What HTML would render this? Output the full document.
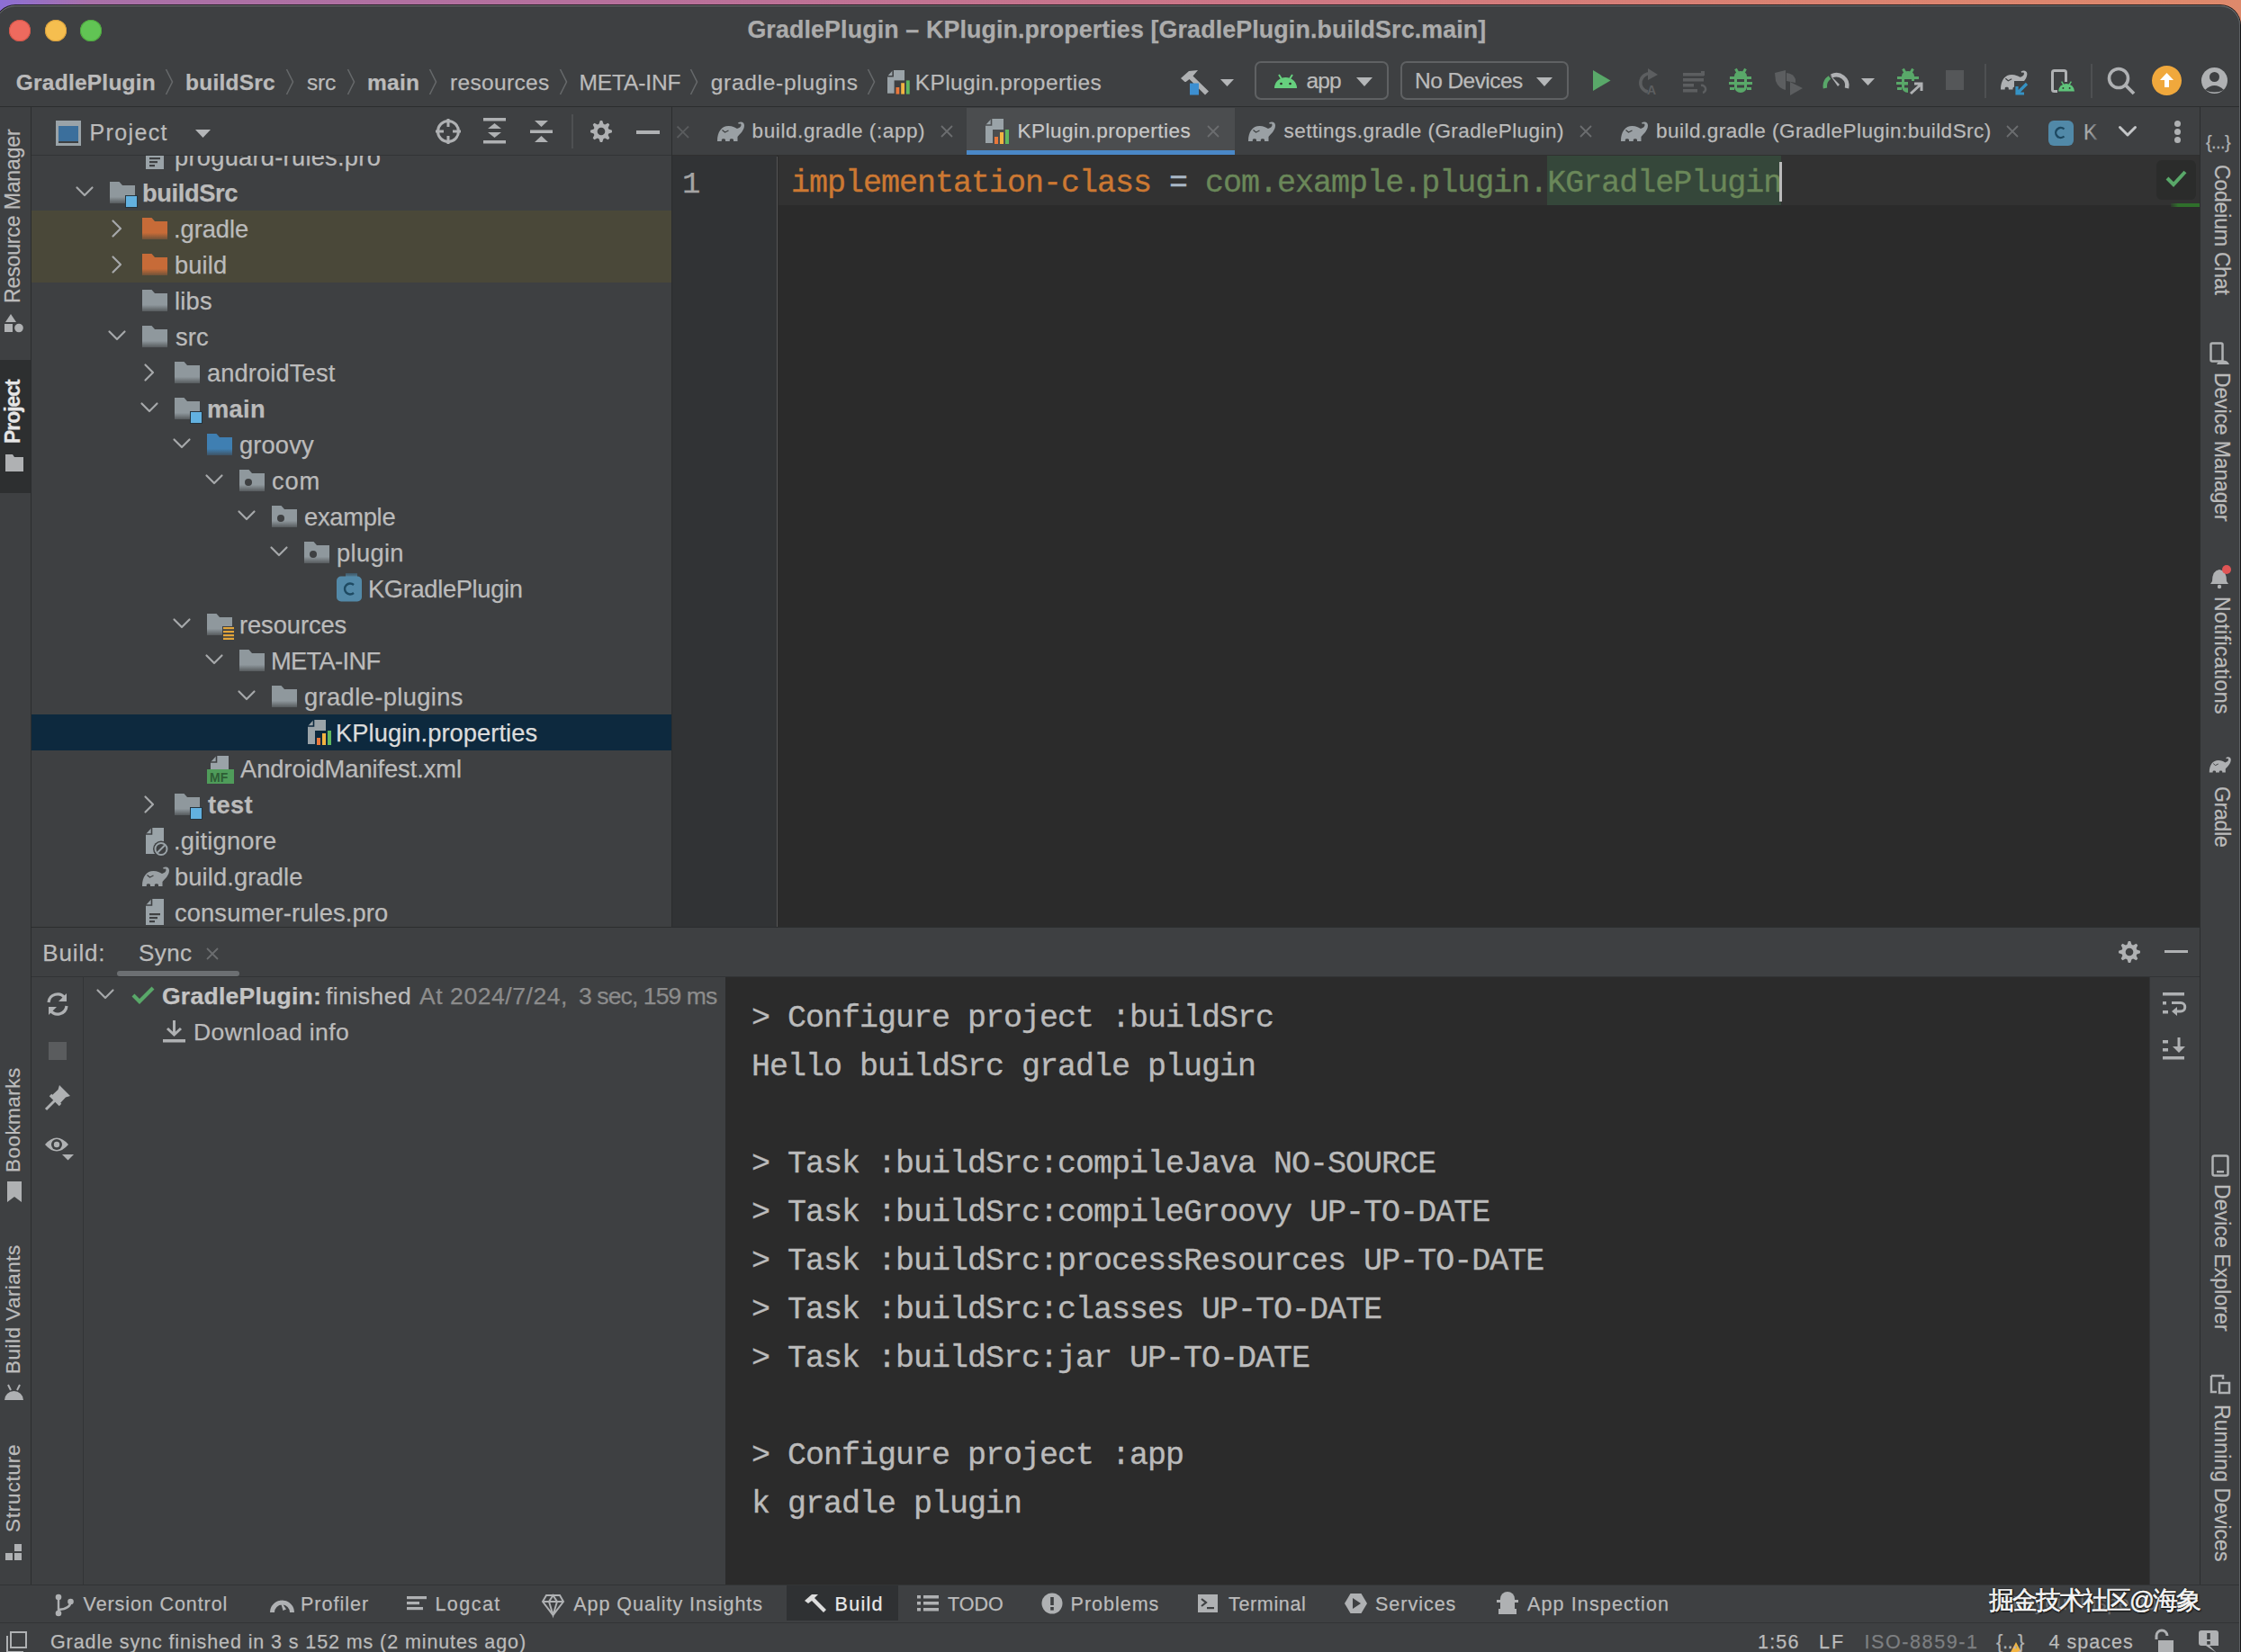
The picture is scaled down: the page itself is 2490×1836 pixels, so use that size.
<!DOCTYPE html><html><head><meta charset="utf-8"><style>
html,body{margin:0;padding:0;width:2490px;height:1836px;overflow:hidden;}
body{position:relative;background:linear-gradient(90deg,#8c6fd6 0%,#a870a8 4%,#b8709a 30%,#cc7686 55%,#d98172 78%,#de896b 100%);font-family:'Liberation Sans',sans-serif;color:#bbbbbb;}
.a{position:absolute;}
.t{position:absolute;white-space:nowrap;-webkit-text-stroke:0.25px currentColor;}
svg{position:absolute;overflow:visible;}
</style></head><body>
<div class="a" style="left:-5px;top:6px;width:2494px;height:1860px;border-radius:22px;background:#3e4042;box-shadow:0 0 0 1px #161618;"></div>
<div class="a" style="left:-5px;top:6px;width:2494px;height:1858px;border-radius:22px;box-shadow:inset 0 1px 0 #6f7173, inset -1px 0 0 #5d6063;"></div>
<div class="a" style="left:0px;top:118px;width:2488px;height:1px;background:#2b2d2e;"></div>
<div class="a" style="left:34px;top:119px;width:1px;height:1642px;background:#2b2d2e;"></div>
<div class="a" style="left:746px;top:119px;width:1px;height:911px;background:#2b2d2e;"></div>
<div class="a" style="left:747px;top:172px;width:1697px;height:1px;background:#303030;"></div>
<div class="a" style="left:747px;top:173px;width:1697px;height:857px;background:#2b2b2b;"></div>
<div class="a" style="left:747px;top:173px;width:116px;height:857px;background:#313335;"></div>
<div class="a" style="left:865px;top:173px;width:1579px;height:55px;background:#323232;"></div>
<div class="a" style="left:863px;top:174px;width:1px;height:856px;background:#555555;"></div>
<div class="a" style="left:2444px;top:119px;width:1px;height:1642px;background:#2b2d2e;"></div>
<div class="a" style="left:35px;top:1030px;width:2409px;height:1px;background:#2b2d2e;"></div>
<div class="a" style="left:35px;top:1085px;width:2409px;height:1px;background:#323436;"></div>
<div class="a" style="left:92px;top:1086px;width:1px;height:675px;background:#323436;"></div>
<div class="a" style="left:806px;top:1086px;width:1582px;height:675px;background:#2b2b2b;"></div>
<div class="a" style="left:2388px;top:1086px;width:1px;height:675px;background:#323436;"></div>
<div class="a" style="left:0px;top:1761px;width:2488px;height:1px;background:#323436;"></div>
<div class="a" style="left:0px;top:1803px;width:2488px;height:1px;background:#323436;"></div>
<div class="a" style="left:10px;top:22px;width:24px;height:24px;border-radius:50%;background:#ee6a5e;box-shadow:inset 0 0 0 1px #d25548"></div>
<div class="a" style="left:50px;top:22px;width:24px;height:24px;border-radius:50%;background:#f5be4f;box-shadow:inset 0 0 0 1px #d9a03d"></div>
<div class="a" style="left:89px;top:22px;width:24px;height:24px;border-radius:50%;background:#61c454;box-shadow:inset 0 0 0 1px #4fa83f"></div>
<div class="a" style="left:1074px;top:120px;width:298px;height:52px;background:#4b4d4f;"></div>
<div class="a" style="left:1074px;top:167px;width:298px;height:5px;background:#4a88c7;"></div>
<div class="a" style="left:35px;top:234px;width:711px;height:80px;background:#4a4839;"></div>
<div class="a" style="left:35px;top:794px;width:711px;height:40px;background:#0d293e;"></div>
<div class="a" style="left:1719px;top:173px;width:260px;height:55px;background:#35473a;"></div>
<div class="t" style="left:879px;top:186.7px;font-family:'Liberation Mono',monospace;font-size:35px;line-height:35px;letter-spacing:-1px;-webkit-text-stroke:0.35px;"><span style="color:#cc7832">implementation-class</span><span style="color:#a9b7c6"> = </span><span style="color:#6a8759">com.example.plugin.KGradlePlugin</span></div>
<div class="a" style="left:1977px;top:180px;width:3px;height:44px;background:#bbbbbb;"></div>
<div class="a" style="left:130px;top:1079px;width:136px;height:6px;border-radius:3px;background:#6c6f72"></div>
<div class="t" style="left:835px;top:1115.4px;font-family:'Liberation Mono',monospace;font-size:35px;line-height:35px;letter-spacing:-1px;-webkit-text-stroke:0.35px #bbbbbb;color:#bbbbbb">&gt; Configure project :buildSrc</div>
<div class="t" style="left:835px;top:1169.4px;font-family:'Liberation Mono',monospace;font-size:35px;line-height:35px;letter-spacing:-1px;-webkit-text-stroke:0.35px #bbbbbb;color:#bbbbbb">Hello buildSrc gradle plugin</div>
<div class="t" style="left:835px;top:1277.4px;font-family:'Liberation Mono',monospace;font-size:35px;line-height:35px;letter-spacing:-1px;-webkit-text-stroke:0.35px #bbbbbb;color:#bbbbbb">&gt; Task :buildSrc:compileJava NO-SOURCE</div>
<div class="t" style="left:835px;top:1331.4px;font-family:'Liberation Mono',monospace;font-size:35px;line-height:35px;letter-spacing:-1px;-webkit-text-stroke:0.35px #bbbbbb;color:#bbbbbb">&gt; Task :buildSrc:compileGroovy UP-TO-DATE</div>
<div class="t" style="left:835px;top:1385.4px;font-family:'Liberation Mono',monospace;font-size:35px;line-height:35px;letter-spacing:-1px;-webkit-text-stroke:0.35px #bbbbbb;color:#bbbbbb">&gt; Task :buildSrc:processResources UP-TO-DATE</div>
<div class="t" style="left:835px;top:1439.4px;font-family:'Liberation Mono',monospace;font-size:35px;line-height:35px;letter-spacing:-1px;-webkit-text-stroke:0.35px #bbbbbb;color:#bbbbbb">&gt; Task :buildSrc:classes UP-TO-DATE</div>
<div class="t" style="left:835px;top:1493.4px;font-family:'Liberation Mono',monospace;font-size:35px;line-height:35px;letter-spacing:-1px;-webkit-text-stroke:0.35px #bbbbbb;color:#bbbbbb">&gt; Task :buildSrc:jar UP-TO-DATE</div>
<div class="t" style="left:835px;top:1601.4px;font-family:'Liberation Mono',monospace;font-size:35px;line-height:35px;letter-spacing:-1px;-webkit-text-stroke:0.35px #bbbbbb;color:#bbbbbb">&gt; Configure project :app</div>
<div class="t" style="left:835px;top:1655.4px;font-family:'Liberation Mono',monospace;font-size:35px;line-height:35px;letter-spacing:-1px;-webkit-text-stroke:0.35px #bbbbbb;color:#bbbbbb">k gradle plugin</div>
<div class="a" style="left:874px;top:1762px;width:124px;height:39px;background:#2f3133;"></div>
<div class="a" style="left:0px;top:400px;width:34px;height:148px;background:#2d2f30;"></div>
<svg style="left:183px;top:76px;" width="10" height="30" viewBox="0 0 10 30"><path d="M1.5 1 L8.5 15 L1.5 29" fill="none" stroke="#66686a" stroke-width="1.6"/></svg>
<svg style="left:317px;top:76px;" width="10" height="30" viewBox="0 0 10 30"><path d="M1.5 1 L8.5 15 L1.5 29" fill="none" stroke="#66686a" stroke-width="1.6"/></svg>
<svg style="left:385px;top:76px;" width="10" height="30" viewBox="0 0 10 30"><path d="M1.5 1 L8.5 15 L1.5 29" fill="none" stroke="#66686a" stroke-width="1.6"/></svg>
<svg style="left:476px;top:76px;" width="10" height="30" viewBox="0 0 10 30"><path d="M1.5 1 L8.5 15 L1.5 29" fill="none" stroke="#66686a" stroke-width="1.6"/></svg>
<svg style="left:620.5px;top:76px;" width="10" height="30" viewBox="0 0 10 30"><path d="M1.5 1 L8.5 15 L1.5 29" fill="none" stroke="#66686a" stroke-width="1.6"/></svg>
<svg style="left:766px;top:76px;" width="10" height="30" viewBox="0 0 10 30"><path d="M1.5 1 L8.5 15 L1.5 29" fill="none" stroke="#66686a" stroke-width="1.6"/></svg>
<svg style="left:962.5px;top:76px;" width="10" height="30" viewBox="0 0 10 30"><path d="M1.5 1 L8.5 15 L1.5 29" fill="none" stroke="#66686a" stroke-width="1.6"/></svg>
<svg style="left:986px;top:78px;" width="28" height="29" viewBox="0 0 28 29"><g transform="scale(0.95)"><path d="M6.5 0 H20 V27 H0 V7 Z" fill="#9aa3a8"/><path d="M6.5 0 V7 H0" fill="none" stroke="#3e4042" stroke-width="1.6"/><rect x="8" y="12" width="20" height="17" fill="#3e4042"/><rect x="10" y="20" width="4" height="8" fill="#e9773a"/><rect x="16" y="15" width="4" height="13" fill="#f2b441"/><rect x="22" y="12" width="4" height="16" fill="#5fb85f"/></g></svg>
<svg style="left:162px;top:159px;" width="20" height="29" viewBox="0 0 20 29"><path d="M6.5 0 H20 V29 H0 V7 Z" fill="#9aa3a8"/><path d="M6.5 0 V7 H0" fill="none" stroke="#3e4042" stroke-width="1.6"/><g fill="#3e4042"><rect x="4" y="16" width="12" height="2.2"/><rect x="4" y="20" width="9" height="2.2"/><rect x="4" y="24" width="6" height="2.2"/></g></svg>
<svg style="left:84px;top:206.5px;" width="20" height="12" viewBox="0 0 20 12"><path d="M1.5 1.5 L10 10 L18.5 1.5" fill="none" stroke="#a6a8aa" stroke-width="2.2" stroke-linecap="round" stroke-linejoin="round"/></svg>
<svg style="left:122px;top:202px;" width="28" height="24" viewBox="0 0 28 24"><defs><linearGradient id="g1" x1="0" y1="0" x2="0" y2="1"><stop offset="0.7" stop-color="#8f989d"/><stop offset="1" stop-color="#8f989d" stop-opacity="0.3"/></linearGradient></defs><path d="M0 0 H10.5 L14 4 H28 V24 H0 Z" fill="url(#g1)"/></svg>
<div class="a" style="left:139px;top:217px;width:14px;height:14px;background:#25333c"></div>
<div class="a" style="left:140px;top:218px;width:12px;height:12px;background:#62b1e0"></div>
<svg style="left:124px;top:244px;" width="12" height="20" viewBox="0 0 12 20"><path d="M1.5 1.5 L10 10 L1.5 18.5" fill="none" stroke="#a6a8aa" stroke-width="2.2" stroke-linecap="round" stroke-linejoin="round"/></svg>
<svg style="left:158px;top:242px;" width="28" height="24" viewBox="0 0 28 24"><defs><linearGradient id="g2" x1="0" y1="0" x2="0" y2="1"><stop offset="0.7" stop-color="#c76b38"/><stop offset="1" stop-color="#c76b38" stop-opacity="0.3"/></linearGradient></defs><path d="M0 0 H10.5 L14 4 H28 V24 H0 Z" fill="url(#g2)"/></svg>
<svg style="left:124px;top:284px;" width="12" height="20" viewBox="0 0 12 20"><path d="M1.5 1.5 L10 10 L1.5 18.5" fill="none" stroke="#a6a8aa" stroke-width="2.2" stroke-linecap="round" stroke-linejoin="round"/></svg>
<svg style="left:158px;top:282px;" width="28" height="24" viewBox="0 0 28 24"><defs><linearGradient id="g3" x1="0" y1="0" x2="0" y2="1"><stop offset="0.7" stop-color="#c76b38"/><stop offset="1" stop-color="#c76b38" stop-opacity="0.3"/></linearGradient></defs><path d="M0 0 H10.5 L14 4 H28 V24 H0 Z" fill="url(#g3)"/></svg>
<svg style="left:158px;top:322px;" width="28" height="24" viewBox="0 0 28 24"><defs><linearGradient id="g4" x1="0" y1="0" x2="0" y2="1"><stop offset="0.7" stop-color="#8f989d"/><stop offset="1" stop-color="#8f989d" stop-opacity="0.3"/></linearGradient></defs><path d="M0 0 H10.5 L14 4 H28 V24 H0 Z" fill="url(#g4)"/></svg>
<svg style="left:120px;top:366.5px;" width="20" height="12" viewBox="0 0 20 12"><path d="M1.5 1.5 L10 10 L18.5 1.5" fill="none" stroke="#a6a8aa" stroke-width="2.2" stroke-linecap="round" stroke-linejoin="round"/></svg>
<svg style="left:158px;top:362px;" width="28" height="24" viewBox="0 0 28 24"><defs><linearGradient id="g5" x1="0" y1="0" x2="0" y2="1"><stop offset="0.7" stop-color="#8f989d"/><stop offset="1" stop-color="#8f989d" stop-opacity="0.3"/></linearGradient></defs><path d="M0 0 H10.5 L14 4 H28 V24 H0 Z" fill="url(#g5)"/></svg>
<svg style="left:160px;top:404px;" width="12" height="20" viewBox="0 0 12 20"><path d="M1.5 1.5 L10 10 L1.5 18.5" fill="none" stroke="#a6a8aa" stroke-width="2.2" stroke-linecap="round" stroke-linejoin="round"/></svg>
<svg style="left:194px;top:402px;" width="28" height="24" viewBox="0 0 28 24"><defs><linearGradient id="g6" x1="0" y1="0" x2="0" y2="1"><stop offset="0.7" stop-color="#8f989d"/><stop offset="1" stop-color="#8f989d" stop-opacity="0.3"/></linearGradient></defs><path d="M0 0 H10.5 L14 4 H28 V24 H0 Z" fill="url(#g6)"/></svg>
<svg style="left:156px;top:446.5px;" width="20" height="12" viewBox="0 0 20 12"><path d="M1.5 1.5 L10 10 L18.5 1.5" fill="none" stroke="#a6a8aa" stroke-width="2.2" stroke-linecap="round" stroke-linejoin="round"/></svg>
<svg style="left:194px;top:442px;" width="28" height="24" viewBox="0 0 28 24"><defs><linearGradient id="g7" x1="0" y1="0" x2="0" y2="1"><stop offset="0.7" stop-color="#8f989d"/><stop offset="1" stop-color="#8f989d" stop-opacity="0.3"/></linearGradient></defs><path d="M0 0 H10.5 L14 4 H28 V24 H0 Z" fill="url(#g7)"/></svg>
<div class="a" style="left:211px;top:457px;width:14px;height:14px;background:#25333c"></div>
<div class="a" style="left:212px;top:458px;width:12px;height:12px;background:#62b1e0"></div>
<svg style="left:192px;top:486.5px;" width="20" height="12" viewBox="0 0 20 12"><path d="M1.5 1.5 L10 10 L18.5 1.5" fill="none" stroke="#a6a8aa" stroke-width="2.2" stroke-linecap="round" stroke-linejoin="round"/></svg>
<svg style="left:230px;top:482px;" width="28" height="24" viewBox="0 0 28 24"><defs><linearGradient id="g8" x1="0" y1="0" x2="0" y2="1"><stop offset="0.7" stop-color="#3f7fb2"/><stop offset="1" stop-color="#3f7fb2" stop-opacity="0.3"/></linearGradient></defs><path d="M0 0 H10.5 L14 4 H28 V24 H0 Z" fill="url(#g8)"/></svg>
<svg style="left:228px;top:526.5px;" width="20" height="12" viewBox="0 0 20 12"><path d="M1.5 1.5 L10 10 L18.5 1.5" fill="none" stroke="#a6a8aa" stroke-width="2.2" stroke-linecap="round" stroke-linejoin="round"/></svg>
<svg style="left:266px;top:522px;" width="28" height="24" viewBox="0 0 28 24"><defs><linearGradient id="g9" x1="0" y1="0" x2="0" y2="1"><stop offset="0.7" stop-color="#8f989d"/><stop offset="1" stop-color="#8f989d" stop-opacity="0.3"/></linearGradient></defs><path d="M0 0 H10.5 L14 4 H28 V24 H0 Z" fill="url(#g9)"/></svg>
<div class="a" style="left:272px;top:532px;width:8px;height:8px;border-radius:50%;background:#3e4042"></div>
<svg style="left:264px;top:566.5px;" width="20" height="12" viewBox="0 0 20 12"><path d="M1.5 1.5 L10 10 L18.5 1.5" fill="none" stroke="#a6a8aa" stroke-width="2.2" stroke-linecap="round" stroke-linejoin="round"/></svg>
<svg style="left:302px;top:562px;" width="28" height="24" viewBox="0 0 28 24"><defs><linearGradient id="g10" x1="0" y1="0" x2="0" y2="1"><stop offset="0.7" stop-color="#8f989d"/><stop offset="1" stop-color="#8f989d" stop-opacity="0.3"/></linearGradient></defs><path d="M0 0 H10.5 L14 4 H28 V24 H0 Z" fill="url(#g10)"/></svg>
<div class="a" style="left:308px;top:572px;width:8px;height:8px;border-radius:50%;background:#3e4042"></div>
<svg style="left:300px;top:606.5px;" width="20" height="12" viewBox="0 0 20 12"><path d="M1.5 1.5 L10 10 L18.5 1.5" fill="none" stroke="#a6a8aa" stroke-width="2.2" stroke-linecap="round" stroke-linejoin="round"/></svg>
<svg style="left:338px;top:602px;" width="28" height="24" viewBox="0 0 28 24"><defs><linearGradient id="g11" x1="0" y1="0" x2="0" y2="1"><stop offset="0.7" stop-color="#8f989d"/><stop offset="1" stop-color="#8f989d" stop-opacity="0.3"/></linearGradient></defs><path d="M0 0 H10.5 L14 4 H28 V24 H0 Z" fill="url(#g11)"/></svg>
<div class="a" style="left:344px;top:612px;width:8px;height:8px;border-radius:50%;background:#3e4042"></div>
<svg style="left:374px;top:637px;" width="28" height="32" viewBox="0 0 28 32"><g transform="scale(1.0)"><defs><linearGradient id="g12" x1="0" y1="0" x2="0" y2="1"><stop offset="0" stop-color="#3d5868"/><stop offset="1" stop-color="#5b8aa6"/></linearGradient></defs><rect x="10" y="0" width="13" height="6" fill="url(#g12)"/><rect x="0" y="3.5" width="28" height="28" rx="5" fill="#5389a8"/><path d="M19 13 A6 6 0 1 0 19 22" fill="none" stroke="#1e4a62" stroke-width="2.4"/></g></svg>
<svg style="left:192px;top:686.5px;" width="20" height="12" viewBox="0 0 20 12"><path d="M1.5 1.5 L10 10 L18.5 1.5" fill="none" stroke="#a6a8aa" stroke-width="2.2" stroke-linecap="round" stroke-linejoin="round"/></svg>
<svg style="left:230px;top:682px;" width="28" height="24" viewBox="0 0 28 24"><defs><linearGradient id="g13" x1="0" y1="0" x2="0" y2="1"><stop offset="0.7" stop-color="#8f989d"/><stop offset="1" stop-color="#8f989d" stop-opacity="0.3"/></linearGradient></defs><path d="M0 0 H10.5 L14 4 H28 V24 H0 Z" fill="url(#g13)"/></svg>
<div class="a" style="left:247px;top:696px;width:13px;height:16px;background:#3e4042"></div>
<svg style="left:248px;top:697px;" width="12" height="14" viewBox="0 0 12 14"><g fill="#e3a53a"><rect x="0" y="0" width="12" height="2.2"/><rect x="0" y="4" width="12" height="2.2"/><rect x="0" y="8" width="12" height="2.2"/><rect x="0" y="11.8" width="12" height="2.2"/></g></svg>
<svg style="left:228px;top:726.5px;" width="20" height="12" viewBox="0 0 20 12"><path d="M1.5 1.5 L10 10 L18.5 1.5" fill="none" stroke="#a6a8aa" stroke-width="2.2" stroke-linecap="round" stroke-linejoin="round"/></svg>
<svg style="left:266px;top:722px;" width="28" height="24" viewBox="0 0 28 24"><defs><linearGradient id="g14" x1="0" y1="0" x2="0" y2="1"><stop offset="0.7" stop-color="#8f989d"/><stop offset="1" stop-color="#8f989d" stop-opacity="0.3"/></linearGradient></defs><path d="M0 0 H10.5 L14 4 H28 V24 H0 Z" fill="url(#g14)"/></svg>
<svg style="left:264px;top:766.5px;" width="20" height="12" viewBox="0 0 20 12"><path d="M1.5 1.5 L10 10 L18.5 1.5" fill="none" stroke="#a6a8aa" stroke-width="2.2" stroke-linecap="round" stroke-linejoin="round"/></svg>
<svg style="left:302px;top:762px;" width="28" height="24" viewBox="0 0 28 24"><defs><linearGradient id="g15" x1="0" y1="0" x2="0" y2="1"><stop offset="0.7" stop-color="#8f989d"/><stop offset="1" stop-color="#8f989d" stop-opacity="0.3"/></linearGradient></defs><path d="M0 0 H10.5 L14 4 H28 V24 H0 Z" fill="url(#g15)"/></svg>
<svg style="left:342px;top:800px;" width="28" height="29" viewBox="0 0 28 29"><g transform="scale(1.0)"><path d="M6.5 0 H20 V27 H0 V7 Z" fill="#9aa3a8"/><path d="M6.5 0 V7 H0" fill="none" stroke="#0d293e" stroke-width="1.6"/><rect x="8" y="12" width="20" height="17" fill="#0d293e"/><rect x="10" y="20" width="4" height="8" fill="#e9773a"/><rect x="16" y="15" width="4" height="13" fill="#f2b441"/><rect x="22" y="12" width="4" height="16" fill="#5fb85f"/></g></svg>
<svg style="left:230px;top:840px;" width="30" height="31" viewBox="0 0 30 31"><path d="M10.5 0 H24 V16 H4 V7 Z" fill="#9aa3a8"/><path d="M10.5 0 V7 H4" fill="none" stroke="#3e4042" stroke-width="1.6"/><rect x="0" y="15" width="30" height="16" fill="#4f9c5a"/><text x="3" y="29" font-family="'Liberation Sans'" font-weight="bold" font-size="14" fill="#2e5e35">MF</text></svg>
<svg style="left:160px;top:884px;" width="12" height="20" viewBox="0 0 12 20"><path d="M1.5 1.5 L10 10 L1.5 18.5" fill="none" stroke="#a6a8aa" stroke-width="2.2" stroke-linecap="round" stroke-linejoin="round"/></svg>
<svg style="left:194px;top:882px;" width="28" height="24" viewBox="0 0 28 24"><defs><linearGradient id="g16" x1="0" y1="0" x2="0" y2="1"><stop offset="0.7" stop-color="#8f989d"/><stop offset="1" stop-color="#8f989d" stop-opacity="0.3"/></linearGradient></defs><path d="M0 0 H10.5 L14 4 H28 V24 H0 Z" fill="url(#g16)"/></svg>
<div class="a" style="left:211px;top:897px;width:14px;height:14px;background:#25333c"></div>
<div class="a" style="left:212px;top:898px;width:12px;height:12px;background:#62b1e0"></div>
<svg style="left:162px;top:920px;" width="27" height="33" viewBox="0 0 27 33"><path d="M6.5 0 H20 V29 H0 V7 Z" fill="#9aa3a8"/><path d="M6.5 0 V7 H0" fill="none" stroke="#3e4042" stroke-width="1.6"/><circle cx="17" cy="23.5" r="9" fill="#3e4042"/><circle cx="17" cy="23.5" r="6.5" fill="none" stroke="#9aa3a8" stroke-width="2"/><path d="M13 27.5 L21 19.5" stroke="#9aa3a8" stroke-width="2"/></svg>
<svg style="left:157px;top:963px;" width="33" height="24" viewBox="0 0 33 24"><g transform="scale(1.0)"><path d="M1 22 C1 11 6 5 13.5 5 C18 5 20.5 6.5 23 8 C25.5 7 27.5 6 27.5 4 C27.5 2.7 26.3 2.2 25 3 L24 1.5 C27 -0.6 31 0.5 31 4.2 C31 9.5 27 13 23.5 17 L23.5 22 L19 22 L19 20.5 C19 18.8 14.8 18.8 14.8 20.5 L14.8 22 L10 22 L10 20.5 C10 18.8 5.8 18.8 5.8 20.5 L5.8 22 Z" fill="#9aa0a4"/><path d="M6.5 9.5 L9.5 12 L13.5 10" fill="none" stroke="#3e4042" stroke-width="1.2"/></g></svg>
<svg style="left:162px;top:999px;" width="20" height="29" viewBox="0 0 20 29"><path d="M6.5 0 H20 V29 H0 V7 Z" fill="#9aa3a8"/><path d="M6.5 0 V7 H0" fill="none" stroke="#3e4042" stroke-width="1.6"/><g fill="#3e4042"><rect x="4" y="16" width="12" height="2.2"/><rect x="4" y="20" width="9" height="2.2"/><rect x="4" y="24" width="6" height="2.2"/></g></svg>
<svg style="left:751px;top:139px;" width="16" height="16" viewBox="0 0 16 16"><path d="M1.5 1.5 L14 14 M14 1.5 L1.5 14" stroke="#5a5c5e" stroke-width="1.8"/></svg>
<svg style="left:796px;top:135px;" width="33" height="24" viewBox="0 0 33 24"><g transform="scale(1.0)"><path d="M1 22 C1 11 6 5 13.5 5 C18 5 20.5 6.5 23 8 C25.5 7 27.5 6 27.5 4 C27.5 2.7 26.3 2.2 25 3 L24 1.5 C27 -0.6 31 0.5 31 4.2 C31 9.5 27 13 23.5 17 L23.5 22 L19 22 L19 20.5 C19 18.8 14.8 18.8 14.8 20.5 L14.8 22 L10 22 L10 20.5 C10 18.8 5.8 18.8 5.8 20.5 L5.8 22 Z" fill="#9aa0a4"/><path d="M6.5 9.5 L9.5 12 L13.5 10" fill="none" stroke="#3e4042" stroke-width="1.2"/></g></svg>
<svg style="left:1045px;top:139px;" width="14" height="14" viewBox="0 0 14 14"><path d="M1 1 L13 13 M13 1 L1 13" stroke="#6b6d6f" stroke-width="1.8"/></svg>
<svg style="left:1095px;top:132px;" width="28" height="29" viewBox="0 0 28 29"><g transform="scale(1.0)"><path d="M6.5 0 H20 V27 H0 V7 Z" fill="#9aa3a8"/><path d="M6.5 0 V7 H0" fill="none" stroke="#4b4d4f" stroke-width="1.6"/><rect x="8" y="12" width="20" height="17" fill="#4b4d4f"/><rect x="10" y="20" width="4" height="8" fill="#e9773a"/><rect x="16" y="15" width="4" height="13" fill="#f2b441"/><rect x="22" y="12" width="4" height="16" fill="#5fb85f"/></g></svg>
<svg style="left:1341px;top:139px;" width="14" height="14" viewBox="0 0 14 14"><path d="M1 1 L13 13 M13 1 L1 13" stroke="#6b6d6f" stroke-width="1.8"/></svg>
<svg style="left:1386px;top:135px;" width="33" height="24" viewBox="0 0 33 24"><g transform="scale(1.0)"><path d="M1 22 C1 11 6 5 13.5 5 C18 5 20.5 6.5 23 8 C25.5 7 27.5 6 27.5 4 C27.5 2.7 26.3 2.2 25 3 L24 1.5 C27 -0.6 31 0.5 31 4.2 C31 9.5 27 13 23.5 17 L23.5 22 L19 22 L19 20.5 C19 18.8 14.8 18.8 14.8 20.5 L14.8 22 L10 22 L10 20.5 C10 18.8 5.8 18.8 5.8 20.5 L5.8 22 Z" fill="#9aa0a4"/><path d="M6.5 9.5 L9.5 12 L13.5 10" fill="none" stroke="#3e4042" stroke-width="1.2"/></g></svg>
<svg style="left:1755px;top:139px;" width="14" height="14" viewBox="0 0 14 14"><path d="M1 1 L13 13 M13 1 L1 13" stroke="#6b6d6f" stroke-width="1.8"/></svg>
<svg style="left:1800px;top:135px;" width="33" height="24" viewBox="0 0 33 24"><g transform="scale(1.0)"><path d="M1 22 C1 11 6 5 13.5 5 C18 5 20.5 6.5 23 8 C25.5 7 27.5 6 27.5 4 C27.5 2.7 26.3 2.2 25 3 L24 1.5 C27 -0.6 31 0.5 31 4.2 C31 9.5 27 13 23.5 17 L23.5 22 L19 22 L19 20.5 C19 18.8 14.8 18.8 14.8 20.5 L14.8 22 L10 22 L10 20.5 C10 18.8 5.8 18.8 5.8 20.5 L5.8 22 Z" fill="#9aa0a4"/><path d="M6.5 9.5 L9.5 12 L13.5 10" fill="none" stroke="#3e4042" stroke-width="1.2"/></g></svg>
<svg style="left:2229px;top:139px;" width="14" height="14" viewBox="0 0 14 14"><path d="M1 1 L13 13 M13 1 L1 13" stroke="#6b6d6f" stroke-width="1.8"/></svg>
<div class="a" style="left:2276px;top:134px;width:28px;height:28px;border-radius:6px;background:#5189a8"></div>
<svg style="left:2281px;top:139px;" width="17" height="17" viewBox="0 0 17 17"><path d="M12.5 4.5 A5.5 5.5 0 1 0 12.5 12.5" fill="none" stroke="#1d4860" stroke-width="2.4"/></svg>
<svg style="left:2354px;top:140px;" width="20" height="12" viewBox="0 0 20 12"><path d="M1.5 1.5 L10 10 L18.5 1.5" fill="none" stroke="#c4c6c8" stroke-width="3" stroke-linecap="round" stroke-linejoin="round"/></svg>
<div class="a" style="left:2416px;top:134px;width:7px;height:7px;border-radius:50%;background:#afb1b3"></div>
<div class="a" style="left:2416px;top:143px;width:7px;height:7px;border-radius:50%;background:#afb1b3"></div>
<div class="a" style="left:2416px;top:152px;width:7px;height:7px;border-radius:50%;background:#afb1b3"></div>
<div class="a" style="left:2396px;top:178px;width:44px;height:44px;background:#2b2c2b;border-radius:6px;"></div>
<svg style="left:2406px;top:188px;" width="24" height="20" viewBox="0 0 24 20"><path d="M2 10 L9 17 L22 3" fill="none" stroke="#59a869" stroke-width="4"/></svg>
<div class="a" style="left:2412px;top:226px;width:32px;height:4px;background:#2f6f2b;background:linear-gradient(90deg,rgba(47,111,43,0.2),#2f6f2b 25%);"></div>
<svg style="left:1312px;top:77px;" width="32" height="30" viewBox="0 0 32 30"><path d="M0 10 L9 2 L19 1 L13.5 7.5 L31 24.5 L27 28.5 L9.5 11 L5 14.5 Z" fill="#afb1b3"/><rect x="3" y="14" width="10" height="10" fill="#3e4042"/><rect x="10" y="15.5" width="10" height="13" fill="#3d8fd1"/></svg>
<svg style="left:1355.5px;top:88.0px;" width="15" height="8" viewBox="0 0 15 8"><path d="M0 0 H15 L7.5 8 Z" fill="#b4b6b8"/></svg>
<div class="a" style="left:1394px;top:68px;width:149px;height:43px;border:2px solid #5f6163;border-radius:7px;box-sizing:border-box"></div>
<svg style="left:1416px;top:82px;" width="26" height="18" viewBox="0 0 26 18"><g transform="scale(1.0)"><path d="M0 16 A12.5 12 0 0 1 25 16 Z" fill="#66cf7e"/><path d="M5 1 L8.5 6.5 M20 1 L16.5 6.5" stroke="#66cf7e" stroke-width="2"/><circle cx="7.5" cy="11" r="1.3" fill="#2b2b2b"/><circle cx="17.5" cy="11" r="1.3" fill="#2b2b2b"/></g></svg>
<svg style="left:1507.0px;top:86.0px;" width="18" height="10" viewBox="0 0 18 10"><path d="M0 0 H18 L9.0 10 Z" fill="#b4b6b8"/></svg>
<div class="a" style="left:1556px;top:68px;width:187px;height:43px;border:2px solid #5f6163;border-radius:7px;box-sizing:border-box"></div>
<svg style="left:1707.0px;top:86.0px;" width="18" height="10" viewBox="0 0 18 10"><path d="M0 0 H18 L9.0 10 Z" fill="#b4b6b8"/></svg>
<svg style="left:1770px;top:78px;" width="20" height="24" viewBox="0 0 20 24"><path d="M0 0 L19.5 11.5 L0 23 Z" fill="#59a869"/></svg>
<svg style="left:1815px;top:76px;" width="30" height="30" viewBox="0 0 30 30"><path d="M16 26 A10 10 0 1 1 20 6" fill="none" stroke="#5c5e60" stroke-width="3.5"/><path d="M16 0 L27 7 L16 13 Z" fill="#5c5e60"/><text x="15" y="29" font-family="'Liberation Sans'" font-weight="bold" font-size="14" fill="#5c5e60">A</text></svg>
<svg style="left:1870px;top:79px;" width="28" height="26" viewBox="0 0 28 26"><g fill="#5c5e60"><rect x="0" y="2" width="23" height="3.5"/><rect x="0" y="8" width="23" height="3.5"/><rect x="0" y="14" width="12" height="3.5"/><rect x="0" y="20" width="16" height="3.5"/><rect x="20" y="0" width="4" height="5"/></g><path d="M20 16 A4 4 0 1 1 22 24" fill="none" stroke="#5c5e60" stroke-width="2.5"/></svg>
<svg style="left:1921px;top:76px;" width="26" height="28" viewBox="0 0 26 28"><path d="M7.5 0.5 L10 5 M18.5 0.5 L16 5" stroke="#59a869" stroke-width="3"/><path d="M13 3 C8 3 6 6 6 9 L6 20 C6 24 9 27 13 27 C17 27 20 24 20 20 L20 9 C20 6 18 3 13 3 Z" fill="#59a869"/><path d="M1 10.5 H6 M20 10.5 H25 M0 16.5 H6 M20 16.5 H26 M1 22.5 H6 M20 22.5 H25" stroke="#59a869" stroke-width="3"/><rect x="9" y="12" width="8" height="3" fill="#3e4042"/><rect x="9" y="18.5" width="8" height="3" fill="#3e4042"/></svg>
<svg style="left:1972px;top:78px;" width="32" height="28" viewBox="0 0 32 28"><path d="M0 3 L12 0 L12 22 Q4 20 1 12 Z" fill="#5c5e60"/><path d="M13 3 Q21 4 23 10 L23 14 L13 12 Z" fill="#5c5e60"/><path d="M17 13 L31 20 L17 28 Z" fill="#5c5e60"/></svg>
<svg style="left:2025px;top:79px;" width="30" height="20" viewBox="0 0 30 20"><path d="M3 19 A12 12 0 0 1 8 7" fill="none" stroke="#59a869" stroke-width="4.5"/><path d="M10 5.5 A12 12 0 0 1 27 19" fill="none" stroke="#afb1b3" stroke-width="4.5"/><path d="M8 4 L17 17 L19 15 Z" fill="#afb1b3"/></svg>
<svg style="left:2067.5px;top:87.0px;" width="15" height="8" viewBox="0 0 15 8"><path d="M0 0 H15 L7.5 8 Z" fill="#b4b6b8"/></svg>
<svg style="left:2107px;top:76px;" width="26" height="28" viewBox="0 0 26 28"><path d="M7.5 0.5 L10 5 M18.5 0.5 L16 5" stroke="#59a869" stroke-width="3"/><path d="M13 3 C8 3 6 6 6 9 L6 20 C6 24 9 27 13 27 C17 27 20 24 20 20 L20 9 C20 6 18 3 13 3 Z" fill="#59a869"/><path d="M1 10.5 H6 M20 10.5 H25 M0 16.5 H6 M20 16.5 H26 M1 22.5 H6 M20 22.5 H25" stroke="#59a869" stroke-width="3"/><rect x="9" y="12" width="8" height="3" fill="#3e4042"/><rect x="9" y="18.5" width="8" height="3" fill="#3e4042"/></svg>
<div class="a" style="left:2120px;top:90px;width:18px;height:17px;background:#3e4042"></div>
<svg style="left:2121px;top:91px;" width="16" height="15" viewBox="0 0 16 15"><path d="M2 13 L13 3 M6 2 H14 V10" fill="none" stroke="#afb1b3" stroke-width="3"/></svg>
<div class="a" style="left:2162px;top:78px;width:20px;height:22px;background:#555759;"></div>
<div class="a" style="left:2205px;top:71px;width:2px;height:38px;background:#4e5052;"></div>
<svg style="left:2222px;top:78px;" width="32" height="23" viewBox="0 0 32 23"><g transform="scale(0.98)"><path d="M1 22 C1 11 6 5 13.5 5 C18 5 20.5 6.5 23 8 C25.5 7 27.5 6 27.5 4 C27.5 2.7 26.3 2.2 25 3 L24 1.5 C27 -0.6 31 0.5 31 4.2 C31 9.5 27 13 23.5 17 L23.5 22 L19 22 L19 20.5 C19 18.8 14.8 18.8 14.8 20.5 L14.8 22 L10 22 L10 20.5 C10 18.8 5.8 18.8 5.8 20.5 L5.8 22 Z" fill="#afb1b3"/><path d="M6.5 9.5 L9.5 12 L13.5 10" fill="none" stroke="#3e4042" stroke-width="1.2"/></g></svg>
<div class="a" style="left:2238px;top:90px;width:18px;height:17px;background:#3e4042"></div>
<svg style="left:2239px;top:91px;" width="16" height="15" viewBox="0 0 16 15"><path d="M13 2 L3 12 M2 5 V13 H10" fill="none" stroke="#3592c4" stroke-width="3.2"/></svg>
<svg style="left:2279px;top:77px;" width="20" height="27" viewBox="0 0 20 27"><rect x="1.5" y="1.5" width="15" height="23" rx="2" fill="none" stroke="#afb1b3" stroke-width="3"/></svg>
<div class="a" style="left:2286px;top:91px;width:20px;height:14px;background:#3e4042"></div>
<svg style="left:2287px;top:90px;" width="19" height="13" viewBox="0 0 19 13"><g transform="scale(0.72)"><path d="M0 16 A12.5 12 0 0 1 25 16 Z" fill="#5fc47a"/><path d="M5 1 L8.5 6.5 M20 1 L16.5 6.5" stroke="#5fc47a" stroke-width="2"/><circle cx="7.5" cy="11" r="1.3" fill="#2b2b2b"/><circle cx="17.5" cy="11" r="1.3" fill="#2b2b2b"/></g></svg>
<div class="a" style="left:2323px;top:71px;width:2px;height:38px;background:#4e5052;"></div>
<svg style="left:2340px;top:73px;" width="34" height="34" viewBox="0 0 34 34"><circle cx="14" cy="14" r="10.5" fill="none" stroke="#afb1b3" stroke-width="3.6"/><path d="M22 22 L31 31" stroke="#afb1b3" stroke-width="3.8"/></svg>
<div class="a" style="left:2391px;top:73px;width:33px;height:33px;border-radius:50%;background:#f0a83c"></div>
<svg style="left:2398px;top:80px;" width="19" height="19" viewBox="0 0 19 19"><path d="M9.5 1 L17 9 H12 V17 H7 V9 H2 Z" fill="#ffffff"/></svg>
<div class="a" style="left:2446px;top:75px;width:29px;height:29px;border-radius:50%;background:#afb1b3"></div>
<div class="a" style="left:2455px;top:80px;width:11px;height:11px;border-radius:50%;background:#3e4042"></div>
<svg style="left:2449px;top:92px;" width="23" height="11" viewBox="0 0 23 11"><path d="M1 8 Q11.5 -2 22 8 Q11.5 13 1 8 Z" fill="#3e4042"/></svg>
<svg style="left:2352px;top:1044px;" width="28" height="28" viewBox="0 0 28 28"><polygon points="2364.82,1046.06 2367.18,1046.06 2368.51,1049.73 2370.07,1050.38 2373.61,1048.72 2375.28,1050.39 2373.62,1053.93 2374.27,1055.49 2377.94,1056.82 2377.94,1059.18 2374.27,1060.51 2373.62,1062.07 2375.28,1065.61 2373.61,1067.28 2370.07,1065.62 2368.51,1066.27 2367.18,1069.94 2364.82,1069.94 2363.49,1066.27 2361.93,1065.62 2358.39,1067.28 2356.72,1065.61 2358.38,1062.07 2357.73,1060.51 2354.06,1059.18 2354.06,1056.82 2357.73,1055.49 2358.38,1053.93 2356.72,1050.39 2358.39,1048.72 2361.93,1050.38 2363.49,1049.73" fill="#afb1b3" transform="translate(-2352,-1044)"/><circle cx="14" cy="14" r="4.32" fill="#3e4042"/></svg>
<div class="a" style="left:2405px;top:1056px;width:26px;height:3px;background:#afb1b3;"></div>
<svg style="left:229px;top:1053px;" width="14" height="14" viewBox="0 0 14 14"><path d="M1 1 L13 13 M13 1 L1 13" stroke="#6b6d6f" stroke-width="1.8"/></svg>
<svg style="left:50px;top:1102px;" width="28" height="28" viewBox="0 0 28 28"><path d="M4 12 A10 10 0 0 1 22 7" fill="none" stroke="#afb1b3" stroke-width="3.2"/><path d="M24 2 L24 11 L15 11 Z" fill="#afb1b3"/><path d="M24 16 A10 10 0 0 1 6 21" fill="none" stroke="#afb1b3" stroke-width="3.2"/><path d="M4 26 L4 17 L13 17 Z" fill="#afb1b3"/></svg>
<div class="a" style="left:54px;top:1158px;width:20px;height:20px;background:#5a5c5e;"></div>
<svg style="left:49px;top:1205px;" width="30" height="30" viewBox="0 0 30 30"><path d="M2 28 L12 18" stroke="#afb1b3" stroke-width="3"/><path d="M17 1 L29 13 L24 14.5 L17 22 L8 13 L15.5 6 Z" fill="#afb1b3"/><path d="M7 12 L18 23" stroke="#afb1b3" stroke-width="3.5"/></svg>
<svg style="left:49px;top:1260px;" width="34" height="32" viewBox="0 0 34 32"><path d="M1 12 Q14 -3 27 12 Q14 27 1 12 Z" fill="#afb1b3"/><circle cx="14" cy="12" r="6" fill="#3e4042"/><circle cx="14" cy="12" r="3.2" fill="#afb1b3"/><path d="M20 23 H33 L26.5 29.5 Z" fill="#afb1b3"/></svg>
<svg style="left:107px;top:1098.5px;" width="20" height="12" viewBox="0 0 20 12"><path d="M1.5 1.5 L10 10 L18.5 1.5" fill="none" stroke="#a6a8aa" stroke-width="2.2" stroke-linecap="round" stroke-linejoin="round"/></svg>
<svg style="left:146px;top:1096px;" width="26" height="20" viewBox="0 0 26 20"><path d="M2 10 L9 17 L24 2" fill="none" stroke="#59a869" stroke-width="4.2"/></svg>
<svg style="left:181px;top:1134px;" width="25" height="25" viewBox="0 0 25 25"><path d="M12.5 0 V15 M5 9 L12.5 16 L20 9" fill="none" stroke="#afb1b3" stroke-width="3"/><rect x="0" y="21" width="25" height="3.5" fill="#afb1b3"/></svg>
<svg style="left:2403px;top:1103px;" width="27" height="28" viewBox="0 0 27 28"><g fill="#afb1b3"><rect x="0" y="0" width="24" height="3.5"/><rect x="0" y="10" width="4" height="3.5"/><rect x="0" y="20" width="6" height="3.5"/></g><path d="M10 11.5 H20 A4.5 4.5 0 0 1 20 21 H14" fill="none" stroke="#afb1b3" stroke-width="3"/><path d="M16 16 L10 21 L16 26 Z" fill="#afb1b3"/></svg>
<svg style="left:2403px;top:1153px;" width="27" height="26" viewBox="0 0 27 26"><g fill="#afb1b3"><rect x="0" y="3" width="6" height="3.5"/><rect x="0" y="12" width="6" height="3.5"/><rect x="0" y="21" width="24" height="3.5"/></g><path d="M18 0 V12" stroke="#afb1b3" stroke-width="3"/><path d="M11 10 H25 L18 17 Z" fill="#afb1b3"/></svg>
<svg style="left:5px;top:349px;" width="22" height="22" viewBox="0 0 22 22"><path d="M7 0 L13 9 H1 Z" fill="#afb1b3"/><rect x="0" y="11" width="9" height="9" fill="#afb1b3"/><circle cx="16" cy="15.5" r="4.8" fill="#afb1b3"/></svg>
<svg style="left:6px;top:505px;" width="20" height="19" viewBox="0 0 20 19"><path d="M0 0 H8 L10 3 H20 V19 H0 Z" fill="#afb1b3"/></svg>
<svg style="left:8px;top:1313px;" width="16" height="23" viewBox="0 0 16 23"><path d="M0 0 H16 V23 L8 17 L0 23 Z" fill="#afb1b3"/></svg>
<svg style="left:5px;top:1539px;" width="21" height="18" viewBox="0 0 21 18"><path d="M0 17 A10.5 10 0 0 1 21 17 Z" fill="#afb1b3"/><path d="M4 0 L7 6 M17 0 L14 6" stroke="#afb1b3" stroke-width="2"/></svg>
<svg style="left:6px;top:1716px;" width="18" height="18" viewBox="0 0 18 18"><g fill="#afb1b3"><rect x="10" y="0" width="8" height="8"/><rect x="10" y="10" width="8" height="8"/><rect x="0" y="10" width="8" height="8"/></g></svg>
<svg style="left:2455px;top:380px;" width="22" height="26" viewBox="0 0 22 26"><rect x="1.5" y="1.5" width="13" height="20" rx="1.5" fill="none" stroke="#afb1b3" stroke-width="2.5"/><path d="M8 25 A7.5 7 0 0 1 22 25 Z" fill="#afb1b3"/></svg>
<svg style="left:2455px;top:628px;" width="24" height="26" viewBox="0 0 24 26"><path d="M3 18 Q3 6 11 5 Q19 6 19 18 L21 21 H1 Z" fill="#afb1b3"/><circle cx="11" cy="24" r="2.2" fill="#afb1b3"/><circle cx="19" cy="5" r="5" fill="#e05555"/></svg>
<svg style="left:2454px;top:841px;" width="26" height="19" viewBox="0 0 26 19"><g transform="scale(0.8)"><path d="M1 22 C1 11 6 5 13.5 5 C18 5 20.5 6.5 23 8 C25.5 7 27.5 6 27.5 4 C27.5 2.7 26.3 2.2 25 3 L24 1.5 C27 -0.6 31 0.5 31 4.2 C31 9.5 27 13 23.5 17 L23.5 22 L19 22 L19 20.5 C19 18.8 14.8 18.8 14.8 20.5 L14.8 22 L10 22 L10 20.5 C10 18.8 5.8 18.8 5.8 20.5 L5.8 22 Z" fill="#afb1b3"/><path d="M6.5 9.5 L9.5 12 L13.5 10" fill="none" stroke="#3e4042" stroke-width="1.2"/></g></svg>
<svg style="left:2457px;top:1283px;" width="20" height="25" viewBox="0 0 20 25"><rect x="1.5" y="1.5" width="17" height="22" rx="2" fill="none" stroke="#afb1b3" stroke-width="2.5"/><rect x="6" y="18" width="8" height="2.5" fill="#afb1b3"/></svg>
<svg style="left:2455px;top:1527px;" width="24" height="24" viewBox="0 0 24 24"><path d="M2 2 H15 V6 M2 2 V20 H8" fill="none" stroke="#afb1b3" stroke-width="2.5"/><rect x="11" y="10" width="11" height="11" fill="none" stroke="#afb1b3" stroke-width="2.5"/></svg>
<svg style="left:61px;top:1771px;" width="22" height="26" viewBox="0 0 22 26"><circle cx="4" cy="4" r="3.3" fill="#afb1b3"/><circle cx="4" cy="22" r="3.3" fill="#afb1b3"/><circle cx="17.5" cy="9" r="3.3" fill="#afb1b3"/><path d="M4 4 V22 M17.5 9 Q17.5 17 4 18" fill="none" stroke="#afb1b3" stroke-width="2.4"/></svg>
<svg style="left:300px;top:1774px;" width="27" height="18" viewBox="0 0 27 18"><path d="M2.5 18 A11 11 0 0 1 24.5 18" fill="none" stroke="#afb1b3" stroke-width="5"/><path d="M11 4 L14.5 16 L18 14.5 Z" fill="#afb1b3"/></svg>
<svg style="left:452px;top:1774px;" width="23" height="16" viewBox="0 0 23 16"><g fill="#afb1b3"><rect x="0" y="0" width="22" height="3.2"/><rect x="0" y="6" width="14" height="3.2"/><rect x="0" y="12" width="18" height="3.2"/></g></svg>
<svg style="left:602px;top:1772px;" width="25" height="25" viewBox="0 0 25 25"><path d="M5 1 H20 L24 8 L12.5 23 L1 8 Z M1 8 H24 M12.5 23 L8 8 L12.5 1 L17 8 Z" fill="none" stroke="#afb1b3" stroke-width="2"/></svg>
<svg style="left:893px;top:1771px;" width="26" height="24" viewBox="0 0 26 24"><path d="M1 8 L9 1 L16 1 L12 5 L25 18 L22 21 L9 8 L5 11 Z" fill="#dddddd"/></svg>
<svg style="left:1019px;top:1773px;" width="25" height="20" viewBox="0 0 25 20"><g fill="#afb1b3"><rect x="0" y="0" width="4" height="3.5"/><rect x="7" y="0" width="17" height="3.5"/><rect x="0" y="7" width="4" height="3.5"/><rect x="7" y="7" width="17" height="3.5"/><rect x="0" y="14" width="4" height="3.5"/><rect x="7" y="14" width="17" height="3.5"/></g></svg>
<svg style="left:1157px;top:1770px;" width="24" height="24" viewBox="0 0 24 24"><circle cx="12" cy="12" r="11.5" fill="#afb1b3"/><rect x="10.2" y="5" width="3.6" height="9" fill="#3e4042"/><rect x="10.2" y="16" width="3.6" height="3.6" fill="#3e4042"/></svg>
<svg style="left:1331px;top:1772px;" width="23" height="21" viewBox="0 0 23 21"><rect x="0" y="0" width="22" height="20" fill="#afb1b3"/><path d="M4 5 L9 9 L4 13" fill="none" stroke="#3e4042" stroke-width="2.2"/><rect x="10" y="14" width="8" height="2.2" fill="#3e4042"/></svg>
<svg style="left:1493px;top:1770px;" width="27" height="24" viewBox="0 0 27 24"><path d="M1 12 L7.5 1 H19.5 L26 12 L19.5 23 H7.5 Z" fill="#afb1b3"/><path d="M10 6 L19 12 L10 18 Z" fill="#3e4042"/></svg>
<svg style="left:1662px;top:1768px;" width="26" height="28" viewBox="0 0 26 28"><path d="M5 22 L5 9 A8 8 0 0 1 21 9 L21 22 Z" fill="#afb1b3"/><rect x="1" y="10" width="24" height="3" fill="#afb1b3"/><rect x="3" y="20" width="20" height="6" fill="#afb1b3"/></svg>
<svg style="left:6px;top:1813px;" width="24" height="24" viewBox="0 0 24 24"><rect x="6" y="1" width="17" height="17" fill="none" stroke="#afb1b3" stroke-width="2"/><path d="M2 5 V23 H20" fill="none" stroke="#afb1b3" stroke-width="2"/></svg>
<svg style="left:2233px;top:1825px;" width="14" height="13" viewBox="0 0 14 13"><path d="M7 0 L14 13 H0 Z" fill="#f2b441"/></svg>
<svg style="left:2392px;top:1812px;" width="24" height="24" viewBox="0 0 24 24"><path d="M4 10 V6 A6 6 0 0 1 16 6" fill="none" stroke="#afb1b3" stroke-width="3"/><rect x="6" y="11" width="17" height="13" fill="#afb1b3"/></svg>
<svg style="left:2441px;top:1812px;" width="26" height="26" viewBox="0 0 26 26"><path d="M5 0 H21 Q24 0 24 3 V17 H14 L22 25 L10 17 H5 Q2 17 2 14 V3 Q2 0 5 0 Z" fill="#afb1b3"/><rect x="11.2" y="3" width="3.6" height="7" fill="#3e4042"/><rect x="11.2" y="12" width="3.6" height="3.6" fill="#3e4042"/></svg>
<div class="t" style="left:830.4px;top:19.9px;font-family:'Liberation Sans',sans-serif;font-size:26.8px;line-height:26.8px;color:#acacac;font-weight:bold;letter-spacing:0.13px;">GradlePlugin – KPlugin.properties [GradlePlugin.buildSrc.main]</div>
<div class="t" style="left:17.8px;top:79.7px;font-family:'Liberation Sans',sans-serif;font-size:24.5px;line-height:24.5px;color:#bbbbbb;font-weight:bold;letter-spacing:0.23px;">GradlePlugin</div>
<div class="t" style="left:206.0px;top:79.7px;font-family:'Liberation Sans',sans-serif;font-size:24.5px;line-height:24.5px;color:#bbbbbb;font-weight:bold;letter-spacing:0.23px;">buildSrc</div>
<div class="t" style="left:341.0px;top:79.7px;font-family:'Liberation Sans',sans-serif;font-size:24.5px;line-height:24.5px;color:#bbbbbb;letter-spacing:-0.20px;">src</div>
<div class="t" style="left:408.0px;top:79.7px;font-family:'Liberation Sans',sans-serif;font-size:24.5px;line-height:24.5px;color:#bbbbbb;font-weight:bold;letter-spacing:0.26px;">main</div>
<div class="t" style="left:500.0px;top:79.7px;font-family:'Liberation Sans',sans-serif;font-size:24.5px;line-height:24.5px;color:#bbbbbb;letter-spacing:0.33px;">resources</div>
<div class="t" style="left:643.5px;top:79.7px;font-family:'Liberation Sans',sans-serif;font-size:24.5px;line-height:24.5px;color:#bbbbbb;letter-spacing:-0.13px;">META-INF</div>
<div class="t" style="left:789.7px;top:79.7px;font-family:'Liberation Sans',sans-serif;font-size:24.5px;line-height:24.5px;color:#bbbbbb;letter-spacing:0.72px;">gradle-plugins</div>
<div class="t" style="left:1016.7px;top:79.7px;font-family:'Liberation Sans',sans-serif;font-size:24.5px;line-height:24.5px;color:#bbbbbb;letter-spacing:0.41px;">KPlugin.properties</div>
<div class="t" style="left:835.6px;top:134.6px;font-family:'Liberation Sans',sans-serif;font-size:22.5px;line-height:22.5px;color:#bbbbbb;letter-spacing:0.59px;">build.gradle (:app)</div>
<div class="t" style="left:1130.5px;top:134.6px;font-family:'Liberation Sans',sans-serif;font-size:22.5px;line-height:22.5px;color:#c8c8c8;letter-spacing:0.49px;">KPlugin.properties</div>
<div class="t" style="left:1426.5px;top:134.6px;font-family:'Liberation Sans',sans-serif;font-size:22.5px;line-height:22.5px;color:#bbbbbb;letter-spacing:0.46px;">settings.gradle (GradlePlugin)</div>
<div class="t" style="left:1840.0px;top:134.6px;font-family:'Liberation Sans',sans-serif;font-size:22.5px;line-height:22.5px;color:#bbbbbb;letter-spacing:0.49px;">build.gradle (GradlePlugin:buildSrc)</div>
<div class="t" style="left:2315.0px;top:135.9px;font-family:'Liberation Sans',sans-serif;font-size:23px;line-height:23px;color:#a8a8a8;">K</div>
<div class="t" style="left:194.0px;top:161.0px;font-family:'Liberation Sans',sans-serif;font-size:27.3px;line-height:27.3px;color:#bbbbbb;letter-spacing:0.25px;">proguard-rules.pro</div>
<div class="t" style="left:158.0px;top:201.0px;font-family:'Liberation Sans',sans-serif;font-size:27.3px;line-height:27.3px;color:#bbbbbb;font-weight:bold;letter-spacing:-0.39px;">buildSrc</div>
<div class="t" style="left:193.0px;top:241.0px;font-family:'Liberation Sans',sans-serif;font-size:27.3px;line-height:27.3px;color:#bbbbbb;letter-spacing:-0.05px;">.gradle</div>
<div class="t" style="left:194.0px;top:281.0px;font-family:'Liberation Sans',sans-serif;font-size:27.3px;line-height:27.3px;color:#bbbbbb;letter-spacing:0.13px;">build</div>
<div class="t" style="left:194.0px;top:321.0px;font-family:'Liberation Sans',sans-serif;font-size:27.3px;line-height:27.3px;color:#bbbbbb;letter-spacing:0.23px;">libs</div>
<div class="t" style="left:195.0px;top:361.0px;font-family:'Liberation Sans',sans-serif;font-size:27.3px;line-height:27.3px;color:#bbbbbb;letter-spacing:0.13px;">src</div>
<div class="t" style="left:230.0px;top:401.0px;font-family:'Liberation Sans',sans-serif;font-size:27.3px;line-height:27.3px;color:#bbbbbb;letter-spacing:0.11px;">androidTest</div>
<div class="t" style="left:230.0px;top:441.0px;font-family:'Liberation Sans',sans-serif;font-size:27.3px;line-height:27.3px;color:#bbbbbb;font-weight:bold;letter-spacing:0.32px;">main</div>
<div class="t" style="left:266.0px;top:481.0px;font-family:'Liberation Sans',sans-serif;font-size:27.3px;line-height:27.3px;color:#bbbbbb;letter-spacing:0.14px;">groovy</div>
<div class="t" style="left:302.0px;top:521.0px;font-family:'Liberation Sans',sans-serif;font-size:27.3px;line-height:27.3px;color:#bbbbbb;letter-spacing:0.89px;">com</div>
<div class="t" style="left:338.0px;top:561.0px;font-family:'Liberation Sans',sans-serif;font-size:27.3px;line-height:27.3px;color:#bbbbbb;letter-spacing:-0.27px;">example</div>
<div class="t" style="left:374.0px;top:601.0px;font-family:'Liberation Sans',sans-serif;font-size:27.3px;line-height:27.3px;color:#bbbbbb;letter-spacing:0.33px;">plugin</div>
<div class="t" style="left:409.0px;top:641.0px;font-family:'Liberation Sans',sans-serif;font-size:27.3px;line-height:27.3px;color:#bbbbbb;letter-spacing:-0.34px;">KGradlePlugin</div>
<div class="t" style="left:266.0px;top:681.0px;font-family:'Liberation Sans',sans-serif;font-size:27.3px;line-height:27.3px;color:#bbbbbb;letter-spacing:-0.08px;">resources</div>
<div class="t" style="left:301.0px;top:721.0px;font-family:'Liberation Sans',sans-serif;font-size:27.3px;line-height:27.3px;color:#bbbbbb;letter-spacing:-0.67px;">META-INF</div>
<div class="t" style="left:338.0px;top:761.0px;font-family:'Liberation Sans',sans-serif;font-size:27.3px;line-height:27.3px;color:#bbbbbb;letter-spacing:0.38px;">gradle-plugins</div>
<div class="t" style="left:373.0px;top:801.0px;font-family:'Liberation Sans',sans-serif;font-size:27.3px;line-height:27.3px;color:#dcdcdc;letter-spacing:0.06px;">KPlugin.properties</div>
<div class="t" style="left:267.0px;top:841.0px;font-family:'Liberation Sans',sans-serif;font-size:27.3px;line-height:27.3px;color:#bbbbbb;letter-spacing:-0.07px;">AndroidManifest.xml</div>
<div class="t" style="left:231.0px;top:881.0px;font-family:'Liberation Sans',sans-serif;font-size:27.3px;line-height:27.3px;color:#bbbbbb;font-weight:bold;letter-spacing:0.32px;">test</div>
<div class="t" style="left:193.0px;top:921.0px;font-family:'Liberation Sans',sans-serif;font-size:27.3px;line-height:27.3px;color:#bbbbbb;letter-spacing:0.21px;">.gitignore</div>
<div class="t" style="left:194.0px;top:961.0px;font-family:'Liberation Sans',sans-serif;font-size:27.3px;line-height:27.3px;color:#bbbbbb;letter-spacing:0.12px;">build.gradle</div>
<div class="t" style="left:194.0px;top:1001.0px;font-family:'Liberation Sans',sans-serif;font-size:27.3px;line-height:27.3px;color:#bbbbbb;letter-spacing:0.12px;">consumer-rules.pro</div>
<div class="t" style="left:758.0px;top:187.8px;font-family:'Liberation Mono',monospace;font-size:34px;line-height:34px;color:#a4a4a4;">1</div>
<div class="t" style="left:47.3px;top:1045.7px;font-family:'Liberation Sans',sans-serif;font-size:26px;line-height:26px;color:#bbbbbb;letter-spacing:0.84px;">Build:</div>
<div class="t" style="left:154.0px;top:1045.7px;font-family:'Liberation Sans',sans-serif;font-size:26px;line-height:26px;color:#bbbbbb;letter-spacing:0.40px;">Sync</div>
<div class="t" style="left:180.0px;top:1093.5px;font-family:'Liberation Sans',sans-serif;font-size:26.5px;line-height:26.5px;color:#c4c4c4;font-weight:bold;letter-spacing:0.26px;">GradlePlugin:</div>
<div class="t" style="left:362.0px;top:1093.5px;font-family:'Liberation Sans',sans-serif;font-size:26.5px;line-height:26.5px;color:#bbbbbb;letter-spacing:0.49px;">finished</div>
<div class="t" style="left:466.0px;top:1093.5px;font-family:'Liberation Sans',sans-serif;font-size:26.5px;line-height:26.5px;color:#8c8c8c;letter-spacing:0.56px;">At 2024/7/24,</div>
<div class="t" style="left:643.0px;top:1093.5px;font-family:'Liberation Sans',sans-serif;font-size:26.5px;line-height:26.5px;color:#8c8c8c;letter-spacing:-0.89px;">3 sec, 159 ms</div>
<div class="t" style="left:215.0px;top:1133.5px;font-family:'Liberation Sans',sans-serif;font-size:26.5px;line-height:26.5px;color:#bbbbbb;letter-spacing:0.40px;">Download info</div>
<div class="t" style="left:92.6px;top:1772.7px;font-family:'Liberation Sans',sans-serif;font-size:21.5px;line-height:21.5px;color:#bbbbbb;letter-spacing:0.91px;">Version Control</div>
<div class="t" style="left:334.0px;top:1772.7px;font-family:'Liberation Sans',sans-serif;font-size:21.5px;line-height:21.5px;color:#bbbbbb;letter-spacing:1.01px;">Profiler</div>
<div class="t" style="left:483.4px;top:1772.7px;font-family:'Liberation Sans',sans-serif;font-size:21.5px;line-height:21.5px;color:#bbbbbb;letter-spacing:1.48px;">Logcat</div>
<div class="t" style="left:637.2px;top:1772.7px;font-family:'Liberation Sans',sans-serif;font-size:21.5px;line-height:21.5px;color:#bbbbbb;letter-spacing:0.98px;">App Quality Insights</div>
<div class="t" style="left:927.5px;top:1772.7px;font-family:'Liberation Sans',sans-serif;font-size:21.5px;line-height:21.5px;color:#e8e8e8;letter-spacing:1.29px;">Build</div>
<div class="t" style="left:1053.0px;top:1772.7px;font-family:'Liberation Sans',sans-serif;font-size:21.5px;line-height:21.5px;color:#bbbbbb;">TODO</div>
<div class="t" style="left:1189.6px;top:1772.7px;font-family:'Liberation Sans',sans-serif;font-size:21.5px;line-height:21.5px;color:#bbbbbb;letter-spacing:0.99px;">Problems</div>
<div class="t" style="left:1365.0px;top:1772.7px;font-family:'Liberation Sans',sans-serif;font-size:21.5px;line-height:21.5px;color:#bbbbbb;letter-spacing:0.65px;">Terminal</div>
<div class="t" style="left:1528.0px;top:1772.7px;font-family:'Liberation Sans',sans-serif;font-size:21.5px;line-height:21.5px;color:#bbbbbb;letter-spacing:0.99px;">Services</div>
<div class="t" style="left:1697.0px;top:1772.7px;font-family:'Liberation Sans',sans-serif;font-size:21.5px;line-height:21.5px;color:#bbbbbb;letter-spacing:1.13px;">App Inspection</div>
<div class="t" style="left:56.0px;top:1814.7px;font-family:'Liberation Sans',sans-serif;font-size:21.5px;line-height:21.5px;color:#bbbbbb;letter-spacing:0.90px;">Gradle sync finished in 3 s 152 ms (2 minutes ago)</div>
<div class="t" style="left:1953.0px;top:1814.7px;font-family:'Liberation Sans',sans-serif;font-size:21.5px;line-height:21.5px;color:#bbbbbb;letter-spacing:1.20px;">1:56</div>
<div class="t" style="left:2021.0px;top:1814.7px;font-family:'Liberation Sans',sans-serif;font-size:21.5px;line-height:21.5px;color:#bbbbbb;letter-spacing:2.04px;">LF</div>
<div class="t" style="left:2071.5px;top:1814.7px;font-family:'Liberation Sans',sans-serif;font-size:21.5px;line-height:21.5px;color:#7d7f81;letter-spacing:1.59px;">ISO-8859-1</div>
<div class="t" style="left:2276.6px;top:1814.7px;font-family:'Liberation Sans',sans-serif;font-size:21.5px;line-height:21.5px;color:#bbbbbb;letter-spacing:1.01px;">4 spaces</div>
<div class="t" style="left:23.0px;top:335.5px;transform-origin:0 0;transform:rotate(-90deg) translate(-1.0px,-19.6px);font-family:'Liberation Sans',sans-serif;font-size:23px;line-height:23px;color:#bbbbbb;letter-spacing:-0.13px;">Resource Manager</div>
<div class="t" style="left:23.0px;top:492.0px;transform-origin:0 0;transform:rotate(-90deg) translate(-1.0px,-19.6px);font-family:'Liberation Sans',sans-serif;font-size:23px;line-height:23px;color:#e6e6e6;font-weight:bold;letter-spacing:-1.05px;">Project</div>
<div class="t" style="left:23.0px;top:1302.0px;transform-origin:0 0;transform:rotate(-90deg) translate(-1.0px,-19.1px);font-family:'Liberation Sans',sans-serif;font-size:22.5px;line-height:22.5px;color:#bbbbbb;letter-spacing:0.46px;">Bookmarks</div>
<div class="t" style="left:23.0px;top:1526.0px;transform-origin:0 0;transform:rotate(-90deg) translate(-1.0px,-19.1px);font-family:'Liberation Sans',sans-serif;font-size:22.5px;line-height:22.5px;color:#bbbbbb;letter-spacing:0.47px;">Build Variants</div>
<div class="t" style="left:23.0px;top:1702.0px;transform-origin:0 0;transform:rotate(-90deg) translate(-1.0px,-19.1px);font-family:'Liberation Sans',sans-serif;font-size:22.5px;line-height:22.5px;color:#bbbbbb;letter-spacing:0.78px;">Structure</div>
<div class="t" style="left:2460.0px;top:183.5px;transform-origin:0 0;transform:rotate(90deg) translate(-1.0px,-19.6px);font-family:'Liberation Sans',sans-serif;font-size:23px;line-height:23px;color:#bbbbbb;letter-spacing:-0.19px;">Codeium Chat</div>
<div class="t" style="left:2460.0px;top:415.0px;transform-origin:0 0;transform:rotate(90deg) translate(-1.0px,-19.6px);font-family:'Liberation Sans',sans-serif;font-size:23px;line-height:23px;color:#bbbbbb;letter-spacing:-0.14px;">Device Manager</div>
<div class="t" style="left:2460.0px;top:664.0px;transform-origin:0 0;transform:rotate(90deg) translate(-1.0px,-19.6px);font-family:'Liberation Sans',sans-serif;font-size:23px;line-height:23px;color:#bbbbbb;letter-spacing:0.44px;">Notifications</div>
<div class="t" style="left:2460.0px;top:874.6px;transform-origin:0 0;transform:rotate(90deg) translate(-1.0px,-19.6px);font-family:'Liberation Sans',sans-serif;font-size:23px;line-height:23px;color:#bbbbbb;letter-spacing:-0.25px;">Gradle</div>
<div class="t" style="left:2460.0px;top:1317.0px;transform-origin:0 0;transform:rotate(90deg) translate(-1.0px,-19.6px);font-family:'Liberation Sans',sans-serif;font-size:23px;line-height:23px;color:#bbbbbb;letter-spacing:0.09px;">Device Explorer</div>
<div class="t" style="left:2460.0px;top:1562.0px;transform-origin:0 0;transform:rotate(90deg) translate(-1.0px,-19.6px);font-family:'Liberation Sans',sans-serif;font-size:23px;line-height:23px;color:#bbbbbb;letter-spacing:0.04px;">Running Devices</div>
<div class="t" style="left:1451.5px;top:78.2px;font-family:'Liberation Sans',sans-serif;font-size:24.5px;line-height:24.5px;color:#bbbbbb;letter-spacing:-0.88px;">app</div>
<div class="t" style="left:1572.0px;top:78.2px;font-family:'Liberation Sans',sans-serif;font-size:24.5px;line-height:24.5px;color:#bbbbbb;letter-spacing:-0.56px;">No Devices</div>
<div class="t" style="left:2451.0px;top:148.0px;font-family:'Liberation Sans',sans-serif;font-size:20px;line-height:20px;color:#afb1b3;letter-spacing:-0.59px;">{...}</div>
<div class="t" style="left:2218.0px;top:1813.8px;font-family:'Liberation Sans',sans-serif;font-size:22px;line-height:22px;color:#afb1b3;letter-spacing:-0.42px;">{...}</div>
<div class="a" style="left:2322px;top:128px;width:14px;height:40px;background:linear-gradient(90deg,rgba(62,64,66,0) 0%,rgba(62,64,66,1) 100%)"></div>
<div class="a" style="left:35px;top:119px;width:711px;height:53px;background:#3e4042;"></div>
<div class="a" style="left:35px;top:172px;width:711px;height:1px;background:#323436;"></div>
<svg style="left:62px;top:134px;" width="28" height="28" viewBox="0 0 28 28"><rect x="0" y="0" width="28" height="28" fill="#9aa3a8"/><rect x="3" y="6" width="22" height="17" fill="#3b6f9c"/><rect x="3" y="23" width="22" height="2" fill="#3e4042"/></svg>
<svg style="left:216.5px;top:143.5px;" width="17" height="9" viewBox="0 0 17 9"><path d="M0 0 H17 L8.5 9 Z" fill="#b4b6b8"/></svg>
<svg style="left:484px;top:132px;" width="30" height="30" viewBox="0 0 30 30"><circle cx="14" cy="14" r="11.5" fill="none" stroke="#afb1b3" stroke-width="3"/><path d="M14 0 V9 M14 19 V28 M0 14 H9 M19 14 H28" stroke="#afb1b3" stroke-width="3"/></svg>
<svg style="left:537px;top:131px;" width="26" height="30" viewBox="0 0 26 30"><rect x="0" y="0" width="25" height="3.5" fill="#afb1b3"/><rect x="0" y="25" width="25" height="3.5" fill="#afb1b3"/><path d="M5 12 L12.5 6 L20 12 Z M5 16 L12.5 22 L20 16 Z" fill="#afb1b3"/></svg>
<svg style="left:589px;top:133px;" width="26" height="26" viewBox="0 0 26 26"><path d="M5 1 L12.5 8 L20 1 Z M5 25 L12.5 18 L20 25 Z" fill="#afb1b3"/><rect x="0" y="11.5" width="25" height="3.5" fill="#afb1b3"/></svg>
<div class="a" style="left:635px;top:127px;width:2px;height:38px;background:#4e5052;"></div>
<svg style="left:654px;top:132px;" width="28" height="28" viewBox="0 0 28 28"><polygon points="666.82,134.06 669.18,134.06 670.51,137.73 672.07,138.38 675.61,136.72 677.28,138.39 675.62,141.93 676.27,143.49 679.94,144.82 679.94,147.18 676.27,148.51 675.62,150.07 677.28,153.61 675.61,155.28 672.07,153.62 670.51,154.27 669.18,157.94 666.82,157.94 665.49,154.27 663.93,153.62 660.39,155.28 658.72,153.61 660.38,150.07 659.73,148.51 656.06,147.18 656.06,144.82 659.73,143.49 660.38,141.93 658.72,138.39 660.39,136.72 663.93,138.38 665.49,137.73" fill="#afb1b3" transform="translate(-654,-132)"/><circle cx="14" cy="14" r="4.32" fill="#3e4042"/></svg>
<div class="a" style="left:707px;top:145px;width:26px;height:3.5px;background:#afb1b3;"></div>
<div class="t" style="left:99.5px;top:134.8px;font-family:'Liberation Sans',sans-serif;font-size:25px;line-height:25px;color:#bbbbbb;letter-spacing:1.36px;">Project</div>
<div class="t" style="left:2236px;top:1771px;font-size:21.5px;line-height:22px;color:rgba(187,187,187,0.35);font-family:'Liberation Sans',sans-serif;letter-spacing:0.6px">Layout Inspector</div>
<div class="t" style="left:2210px;top:1762px;font-size:27.5px;line-height:34px;color:#f4f4f4;-webkit-text-stroke:0.6px #f4f4f4;text-shadow:0 0 1px #000,0 0 2px #000,1px 1px 2px #000;font-family:'Liberation Sans',sans-serif;letter-spacing:-2px">掘金技术社区@海象</div>
</body></html>
